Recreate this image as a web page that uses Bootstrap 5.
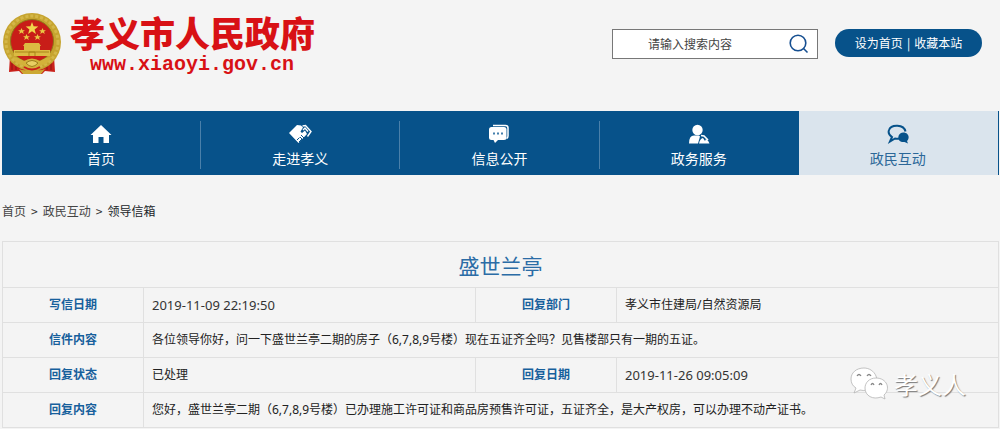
<!DOCTYPE html>
<html lang="zh-CN">
<head>
<meta charset="utf-8">
<meta name="viewport" content="width=device-width, initial-scale=1">
<title>孝义市人民政府 - 领导信箱</title>
<link href="https://cdn.jsdelivr.net/npm/bootstrap@5.3.0/dist/css/bootstrap.min.css" rel="stylesheet">
<style>
:root { --brand: #07528a; --line: #e0e0e0; }
body { background: #f4f4f4; color: #333; font: 12px/18px "Noto Sans", "Noto Sans CJK SC", sans-serif; overflow-x: hidden; }
.cjk { font-family: "Noto Sans CJK SC", sans-serif; }
.page { padding: 0 1px 0 2px; }
.masthead { height: 111px; padding: 12px 17px 0 0; }
.site-logo { color: #d81115; gap: 8px; }
.site-name { font-size: 35px; line-height: 40px; font-weight: 900; }
.site-url { font: 700 20px/26px "Liberation Mono", monospace; padding-left: 20px; }
.tools { gap: 17px; padding-top: 17px; }
.search { width: 206px; height: 30px; border: 1px solid #777; background: #fff; }
.search input { font-size: 12px; line-height: 18px; border: 0; padding: 0 0 0 35px; min-width: 0; background: none; color: #444; outline: 0; }
.search input::placeholder { color: #444; opacity: 1; }
.search button { border: 0; background: none; padding: 0 8px 0 0; }
.quick { background: var(--brand); width: 147px; height: 28px; color: #fff; gap: 4px; }
.quick a { color: #fff; }
.main-nav { background: var(--brand); padding-right: 1px; }
.main-nav li { padding: 10px 0 6px; }
.main-nav a { height: 48px; color: #fff; font-size: 14px; line-height: 20px; border-right: 1px solid #4a80aa; gap: 3px; }
.main-nav .current { background: #dae4ed; }
.main-nav .current a { color: #2b6798; border-color: transparent; }
.main-nav li:nth-child(4) a { border-color: transparent; }
.crumbs { padding: 27px 0 21px; gap: 5px; }
.crumbs a { color: #444; }
.letter { table-layout: fixed; border-collapse: collapse; }
.letter th, .letter td { border: 1px solid var(--line); height: 35px; padding: 0 8px; vertical-align: middle; color: #222; }
.letter tbody th { color: #17609c; text-align: center; }
.letter .heading { height: 46px; font-size: 21px; line-height: 28px; font-weight: 400; color: #2b6ca6; text-align: center; }
.letter time { font-size: 13px; color: #333; }
.label-col { width: 141px; }
.value-col { width: 332px; }
.watermark { position: absolute; right: 33px; bottom: 26px; gap: 6px; font-size: 24px; line-height: 36px; color: #fff; text-shadow: 1px 1px 1px #777; pointer-events: none; }
</style>
</head>
<body>
<div class="page">
  <header class="masthead d-flex justify-content-between align-items-start">
    <a href="#" class="site-logo d-flex text-decoration-none">
      <svg width="60" height="64" viewBox="0 0 60 64" aria-label="国徽" role="img">
        <path d="M8 44 7 60l10-1 3 3h20l3-3 10 1-1-16z" fill="#c9211b"/>
        <path d="M10 47v11m4-9v9m35-11v11m-4-9v9" stroke="#8e1712"/>
        <circle cx="30" cy="30" r="29" fill="#c6a42f"/>
        <circle cx="30" cy="30" r="26" fill="none" stroke="#d4b748" stroke-width="3" stroke-dasharray="3 2"/>
        <circle cx="30" cy="29" r="21.500" fill="#c81d18" stroke="#927719"/>
        <path d="m30 10 1.600 4.300 4.700.2-3.700 2.900 1.300 4.500-3.900-2.600-3.900 2.600 1.300-4.500-3.700-2.900 4.700-.2z" fill="#f1d54b"/>
        <g fill="#e9c945"><path id="s" d="m19.500 16 1 2.200h2.400l-1.900 1.500.8 2.300-2.300-1.400-2.300 1.400.8-2.300-1.900-1.500h2.400z"/><use href="#s" x="21"/><use href="#s" x="5" y="6"/><use href="#s" x="16" y="6"/></g>
        <path d="M23 31h14l2 3H21zm-1 3h16v4h10v6H12v-6h10z" fill="#dcba42"/>
        <path d="M13 40h34M27 44v-4h6v4" stroke="#a98419" fill="none"/>
        <path d="M11 45q7 1 11 4 8-5 16 0 4-3 11-4-3 8-10 8-4 5-9 5t-9-5q-7 0-10-8z" fill="#d3b23a"/>
        <path d="M24 51q6-5 12 0-6 7-12 0" fill="#e8cf63" stroke="#9d7e1e"/>
        <path d="M17 57q7 3 13-1 6 4 13 1l-4 5H21z" fill="#cca832"/>
        <path d="M22 55q8 5 16 0" stroke="#c9211b" stroke-width="2" fill="none"/>
      </svg>
      <span><span class="site-name cjk d-block">孝义市人民政府</span><span class="site-url d-block">www.xiaoyi.gov.cn</span></span>
    </a>
    <div class="tools d-flex">
      <form class="search d-flex align-items-center cjk" role="search">
        <input class="flex-grow-1" type="search" placeholder="请输入搜索内容" aria-label="请输入搜索内容">
        <button type="button" aria-label="搜索"><svg class="d-block" width="20" height="20" viewBox="0 0 20 20" fill="none" stroke="#164f91" stroke-width="1.600"><circle cx="9" cy="9" r="7.800"/><path d="m14.500 14.500 4 4"/></svg></button>
      </form>
      <div class="quick cjk rounded-pill d-flex align-items-center justify-content-center"><a class="text-decoration-none" href="#">设为首页</a><span>|</span><a class="text-decoration-none" href="#">收藏本站</a></div>
    </div>
  </header>

  <nav class="main-nav cjk">
    <ul class="row row-cols-5 g-0 list-unstyled mb-0">
      <li><a href="#" class="d-flex flex-column align-items-center text-decoration-none">
        <svg width="22" height="24" viewBox="0 0 22 24"><path d="M11 4 .5 14H3v8h5.500v-6h5v6H19v-8h2.500z" fill="#fff"/></svg>首页</a></li>
      <li><a href="#" class="d-flex flex-column align-items-center text-decoration-none">
        <svg width="24" height="24" viewBox="0 0 24 24"><path d="m1 12 8-8 4 .5 2 2-2.500 4 1.500 1.500 3-2.500 2 3.500-8.500 9z" fill="#fff"/><path d="m14.500 5 3-.5 5.500 6-3.500 5M15 9l2-2 3 3.500" stroke="#fff" stroke-width="1.400" fill="none"/><path d="m9 19 2.500-2.500M11 21l3-3m-1-4 3 3m-4-1 3 3" stroke="#07528a" stroke-width="1"/></svg>走进孝义</a></li>
      <li><a href="#" class="d-flex flex-column align-items-center text-decoration-none">
        <svg width="22" height="24" viewBox="0 0 22 24"><path d="M5 4.500h12.500q2.500 0 2.500 2.500v8q0 2-1.500 2.500" fill="none" stroke="#fff" stroke-width="1.500"/><rect x="1" y="6" width="17.500" height="13" rx="2.500" fill="#fff"/><path d="M5 18h6l-4 4z" fill="#fff"/><path d="M5 12.500h2m2 0h2m2 0h2" stroke="#4480ad" stroke-width="2"/></svg>信息公开</a></li>
      <li><a href="#" class="d-flex flex-column align-items-center text-decoration-none">
        <svg width="22" height="24" viewBox="0 0 22 24"><circle cx="9.500" cy="9" r="5.200" fill="#fff"/><path d="M1 22.500q0-8 5-8h5l1 1-2 7z" fill="#fff"/><path d="M11 22.500q1-5 4-5.500l2 3 1-2q3 2 3.500 4.500z" fill="#fff"/><path d="m13 14.500 3 .500 4 4" stroke="#fff" stroke-width="1.600" fill="none"/></svg>政务服务</a></li>
      <li class="current"><a href="#" aria-current="page" class="d-flex flex-column align-items-center text-decoration-none">
        <svg width="22" height="24" viewBox="0 0 22 24" fill="#07528a"><path d="M18.500 10.500C17 3 4 3 2 9q-1.500 4 3 7l-2 4.500 5-3q2 .5 4 0" fill="none" stroke="#07528a" stroke-width="2"/><path d="M16 11.500c6 0 7 5.500 4 8.500l1 2.500-3.500-1.500c-8 1-8-9-1.500-9.500"/></svg>政民互动</a></li>
    </ul>
  </nav>

  <nav class="crumbs cjk d-flex" aria-label="面包屑"><a class="text-decoration-none" href="#">首页</a><span>&gt;</span><a class="text-decoration-none" href="#">政民互动</a><span>&gt;</span><span class="text-dark">领导信箱</span></nav>

  <main class="position-relative">
    <table class="letter w-100">
      <colgroup><col class="label-col"><col class="value-col"><col class="label-col"><col></colgroup>
      <thead><tr><th class="heading cjk" colspan="4">盛世兰亭</th></tr></thead>
      <tbody>
        <tr><th scope="row">写信日期</th><td><time>2019-11-09 22:19:50</time></td><th scope="row">回复部门</th><td>孝义市住建局/自然资源局</td></tr>
        <tr><th scope="row">信件内容</th><td colspan="3">各位领导你好，问一下盛世兰亭二期的房子（6,7,8,9号楼）现在五证齐全吗？见售楼部只有一期的五证。</td></tr>
        <tr><th scope="row">回复状态</th><td>已处理</td><th scope="row">回复日期</th><td><time>2019-11-26 09:05:09</time></td></tr>
        <tr><th scope="row">回复内容</th><td colspan="3">您好，盛世兰亭二期（6,7,8,9号楼）已办理施工许可证和商品房预售许可证，五证齐全，是大产权房，可以办理不动产证书。</td></tr>
      </tbody>
    </table>
    <div class="watermark cjk d-flex align-items-center">
      <svg width="38" height="34" viewBox="0 0 38 34" fill="#fff" stroke="#b4b4b4" stroke-width=".8"><path d="M14 1C6 1 1 6 1 12q0 6 5 9l-2 5 6-3q3 1 7 0C27 21 28 14 26 9 24 4 19 1 14 1z"/><path d="M26 11c-7 0-11 5-11 10 0 8 8 12 16 9l4 2-1-4c7-6 3-17-8-17z"/><path d="M7 9q2-3 4 0m6 0q2-3 4 0m0 9q1.500-3 3 0m5 0q1.500-3 3 0" fill="none" stroke="#888" stroke-width="1.300"/></svg>
      <span>孝义人</span>
    </div>
  </main>
</div>
<script src="https://cdn.jsdelivr.net/npm/bootstrap@5.3.0/dist/js/bootstrap.bundle.min.js"></script>
</body>
</html>
